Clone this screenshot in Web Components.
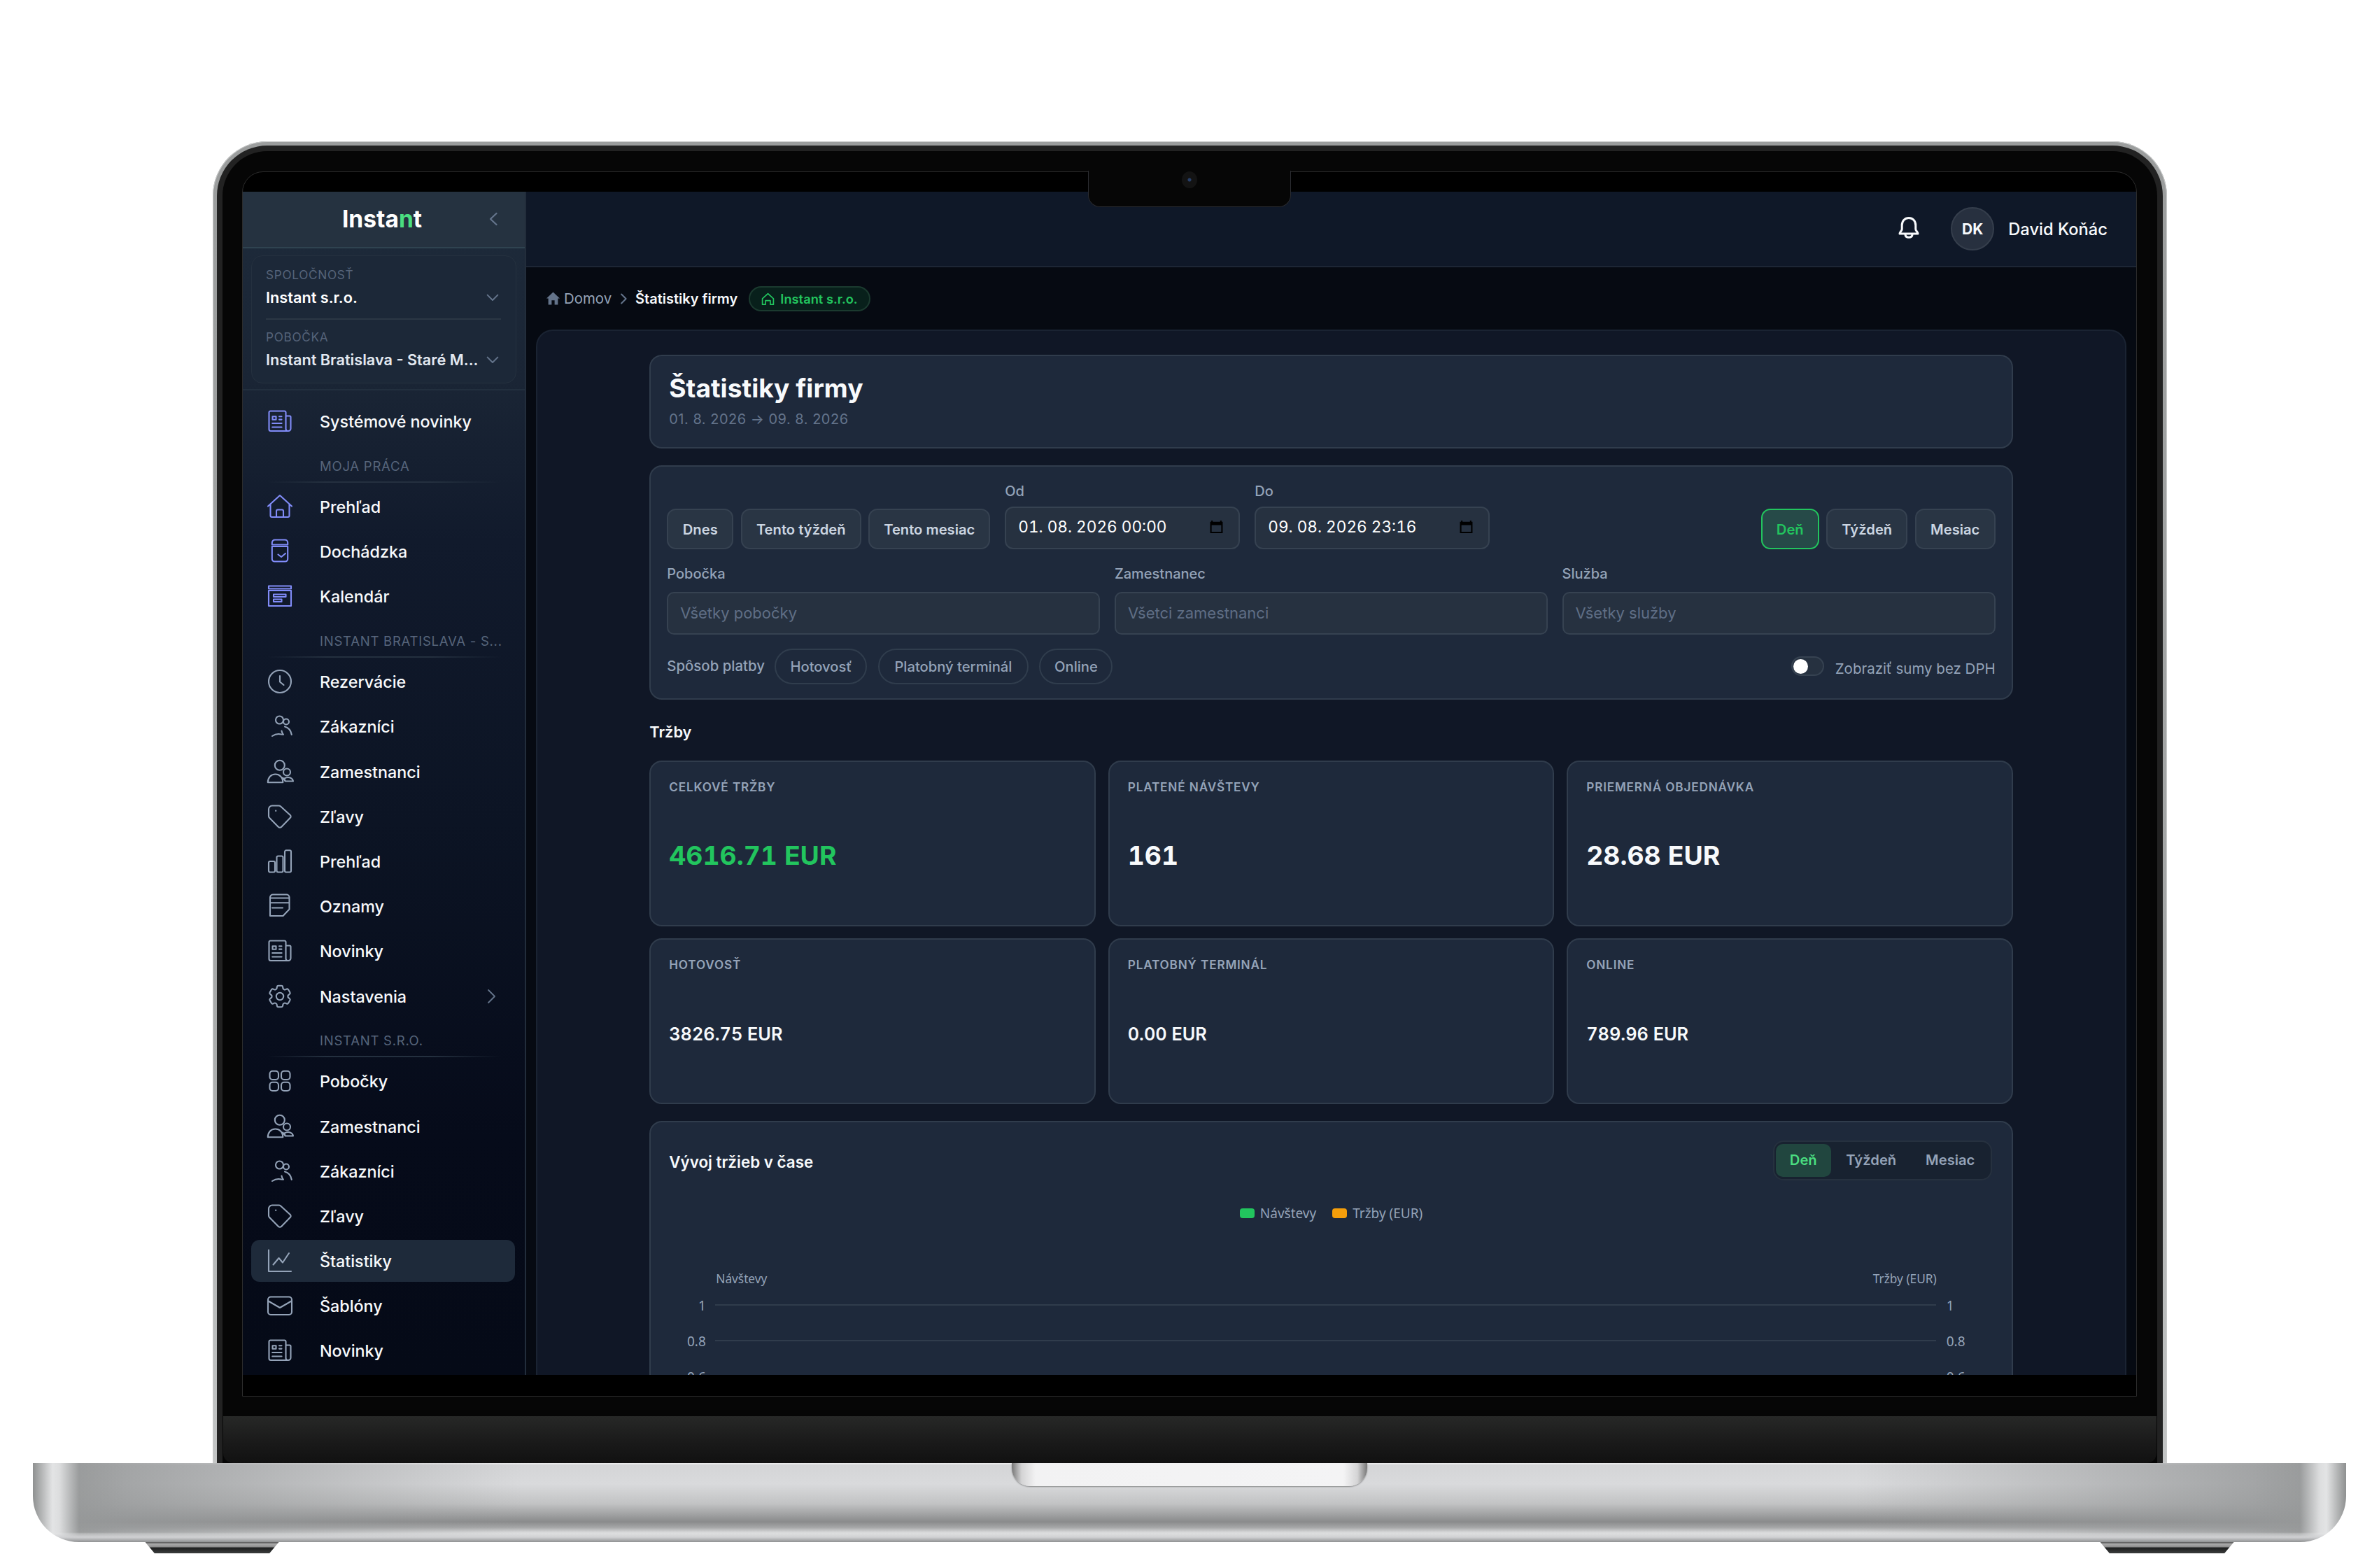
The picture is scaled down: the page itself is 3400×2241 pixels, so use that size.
<!DOCTYPE html>
<html lang="sk">
<head>
<meta charset="utf-8">
<title>Instant – Štatistiky firmy</title>
<style>
  html, body { margin: 0; background: #fff; }
  body {
    width: 3400px;
    height: 2241px;
    overflow: hidden;
    font-family: Inter, "Liberation Sans", sans-serif;
    color: #f8fafc;
    --card: #1e293b;
    --line: #303c4c;
    --muted: #94a3b8;
    --dim: #64748b;
    --green: #22c55e;
  }
</style>
</head>
<body>
<laptop-frame>
  <side-bar slot="screen"></side-bar>
  <main-area slot="screen"></main-area>
</laptop-frame>

<script>
const icons = {
  news: '<path d="M26.5 10V5.5a2 2 0 0 0-2-2H4.500a2 2 0 0 0-2 2v24A2.500 2.500 0 0 0 5 32h25a3.500 3.500 0 0 0 3.500-3.500V12A1.500 1.500 0 0 0 32 10.500h-5.500V29a3 3 0 0 0 3 3"/><path d="M7.500 11.200h5v4.500h-5zM17 11.200h3.500M17 15.600h3.500M7.200 21h13.400M7.200 26.500h13.400"/>',
  home: '<path d="M1 17.500 18 2l17 15.500M4.500 15v16a2 2 0 0 0 2 2h23a2 2 0 0 0 2-2V15M13 33v-8.500a2 2 0 0 1 2-2h6a2 2 0 0 1 2 2V33"/>',
  attend: '<path d="M6.800 8.500V5.500a4 4 0 0 1 4-4h14.400a4 4 0 0 1 4 4v3zM6.800 11h22.400v18a3.500 3.500 0 0 1-3.500 3.500H10.300A3.500 3.500 0 0 1 6.800 29zM15.500 22.500l4.500 3.500 6-5"/>',
  calendar: '<path d="M2 3.500h32v4H2zM2 10h32v22H2zM9 15.500h17.500v3.500H9zM9 22.500h11.500V26H9z"/>',
  clock: '<circle cx="18" cy="18" r="16"/><path d="M18 10v8.500l5.500 4.500"/>',
  clients: '<circle cx="17.500" cy="9" r="5.500"/><circle cx="27" cy="11.500" r="4"/><path d="M7 32c3-2 6.500-3 9-3 3 0 5 1 7 .8-1.500-1.800-2.500-3.300-2.500-5.300M25 18.500c5.500 1.500 8.800 5.500 9.800 11.500"/>',
  staff: '<circle cx="17.800" cy="8.800" r="7"/><circle cx="28" cy="18.500" r="5"/><path d="M.8 33.300c0-7 4.500-11.800 10.700-11.800S22.300 26 22.300 33.300zM22 26.500l4 5M24.500 27.500c6-3 11.500-1 12.500 4H25.500z"/>',
  tag: '<path d="M7 2.500h9.500a4 4 0 0 1 2.600 1L32.800 16a2.600 2.600 0 0 1 0 3.800L20.300 32.700a3.200 3.200 0 0 1-4.600 0L3.200 20A4 4 0 0 1 2 17.200V7.500a5 5 0 0 1 5-5zM12.200 9.600v.4"/>',
  bars: '<rect x="2" y="18" width="9" height="15.500" rx="2"/><rect x="13.500" y="10.500" width="9" height="23" rx="2"/><rect x="25" y="2.300" width="9" height="31.200" rx="2"/>',
  note: '<path d="M4 32V5.500a4 4 0 0 1 4-4h19.500a4 4 0 0 1 4 4V22.500L22.500 32zM4 6.500h27.500M4 13.300h27.500M7 20.500h15"/>',
  gear: '<path vector-effect="non-scaling-stroke" transform="translate(18 18) scale(1.700) translate(-12 -12)" d="M9.594 3.940c.09-.542.56-.94 1.110-.94h2.593c.55 0 1.020.398 1.110.94l.213 1.281c.063.374.313.686.645.87.074.04.147.083.22.127.325.196.72.257 1.075.124l1.217-.456a1.125 1.125 0 0 1 1.370.49l1.296 2.247a1.125 1.125 0 0 1-.26 1.431l-1.003.827c-.293.241-.438.613-.43.992a7.723 7.723 0 0 1 0 .255c-.008.378.137.75.43.991l1.004.827c.424.35.534.955.26 1.430l-1.298 2.247a1.125 1.125 0 0 1-1.369.491l-1.217-.456c-.355-.133-.75-.072-1.076.124a6.470 6.470 0 0 1-.22.128c-.331.183-.581.495-.644.869l-.213 1.281c-.09.543-.56.94-1.110.94h-2.594c-.55 0-1.019-.398-1.110-.94l-.213-1.281c-.062-.374-.312-.686-.644-.87a6.520 6.520 0 0 1-.22-.127c-.325-.196-.72-.257-1.076-.124l-1.217.456a1.125 1.125 0 0 1-1.369-.49l-1.297-2.247a1.125 1.125 0 0 1 .26-1.431l1.004-.827c.292-.24.437-.613.43-.991a6.932 6.932 0 0 1 0-.255c.007-.38-.138-.751-.43-.992l-1.004-.827a1.125 1.125 0 0 1-.26-1.430l1.297-2.247a1.125 1.125 0 0 1 1.370-.491l1.216.456c.356.133.751.072 1.076-.124.072-.044.146-.086.22-.128.332-.183.582-.495.644-.869z"/><circle cx="18" cy="18" r="5.200"/>',
  grid: '<rect x="3.500" y="3.700" width="12.500" height="12.300" rx="4"/><rect x="20" y="3.700" width="12.500" height="12.300" rx="4"/><rect x="3.500" y="19.700" width="12.500" height="12.300" rx="4"/><rect x="20" y="19.700" width="12.500" height="12.300" rx="4"/>',
  stats: '<path d="M2 2.500v30.500h32M8.500 23.500l8-9.500 5.500 6.500 9-13.500"/>',
  mail: '<rect x="1" y="5.500" width="34" height="25.500" rx="4"/><path d="M1.500 11.500 18 21l16.500-9.500"/>',
  left: '<path d="M22.500 10 14 18l8.500 8"/>',
  right: '<path d="m14 9 9 9-9 9"/>',
  down: '<path d="m7 13 11 11 11-11"/>',
  bell: '<path d="M18 2.500c-6 0-9.800 4.500-9.800 10.500v5.500c0 2.500-3.200 4-3.200 6.500h26c0-2.500-3.200-4-3.200-6.500V13c0-6-3.800-10.500-9.800-10.500zM13 26.500c.5 5 9.500 5 10 0"/>',
  date: '<path stroke="none" fill="#000" d="M4 2h4v3h20V2h4v3h3v31H1V5h3zM5 14v18h26V14z" fill-rule="evenodd"/>',
  homeSolid: '<path stroke="none" fill="currentColor" d="M18 1 0 18h5v17h9V23h8v12h9V18h5z"/>',
  building: '<path d="M3 17 18 3l15 14v15.500h-8.500V22h-13v10.500H3z"/>'
};

// <app-icon name size stroke> draws one glyph on a 36x36 grid
class AppIcon extends HTMLElement {
  constructor() {
    super();
    this.attachShadow({ mode: 'open' });
  }

  connectedCallback() {
    const size = this.getAttribute('size') || 36;
    this.shadowRoot.innerHTML = `
      <style>
        :host { display: block; flex: none; width: ${size}px; height: ${size}px; }
        svg { display: block; overflow: visible; }
      </style>
      <svg width="${size}" height="${size}" viewBox="0 0 36 36" fill="none" stroke="currentColor"
        stroke-width="${this.getAttribute('stroke') || 2.1}" stroke-linecap="round" stroke-linejoin="round">
        ${icons[this.getAttribute('name')]}
      </svg>
    `;
  }
}

class LaptopFrame extends HTMLElement {
  constructor() {
    super();
    this.attachShadow({ mode: 'open' }).innerHTML = `
      <style>
        :host { display: flex; flex-direction: column; align-items: center; padding-top: 202px; }
        .lid {
          box-sizing: border-box;
          width: 2793px;
          height: 1889px;
          padding: 6px 6px 0;
          border-radius: 78px 78px 0 0;
          background: linear-gradient(#9b9d9d, #a5a7a7 60%, #c3c5c5);
          box-shadow: inset 0 0 0 1px #c8caca;
        }
        .ring {
          box-sizing: border-box;
          height: 100%;
          padding: 8px 8px 0;
          border-radius: 72px 72px 0 0;
          background: #222;
        }
        .bezel {
          display: flex;
          flex-direction: column;
          align-items: center;
          height: 100%;
          border-radius: 64px 64px 0 0;
          background: #060606;
          position: relative;
        }
        .screen {
          box-sizing: border-box;
          display: flex;
          width: 2708px;
          height: 1751px;
          margin-top: 29px;
          padding: 28px 0 30px;
          border: 1px solid #2c2c2c;
          border-radius: 30px 30px 0 0;
          background: #000;
          overflow: hidden;
        }
        .notch {
          position: absolute;
          top: 28px;
          left: 50%;
          width: 290px;
          height: 52px;
          box-sizing: border-box;
          margin-left: -145px;
          border: 1px solid #2b2c30;
          border-top: 0;
          border-radius: 0 0 17px 17px;
          background: #060606;
          display: flex;
          justify-content: center;
        }
        .cam {
          width: 22px;
          height: 24px;
          margin-top: 1px;
          border-radius: 50%;
          background: radial-gradient(circle, #28406b 2px, #131313 3px);
        }
        .chin {
          width: 2763px;
          height: 67px;
          margin-top: 28px;
          border-radius: 0 0 14px 14px;
          background: linear-gradient(#272827, #1a1a1a 55%, #111);
        }
        .base {
          display: flex;
          justify-content: center;
          width: 3306px;
          height: 113px;
          border-radius: 0 0 66px 66px;
          background:
            linear-gradient(transparent 99px, #e4e5e666 101px, #d0d1d3 106px, #8f9192 113px),
            linear-gradient(90deg, #8e9090, #e3e4e5 28px, #dcddde 38px, #96989866 66px, transparent 130px, transparent 3176px, #96989866 3240px, #dcddde 3268px, #e3e4e5 3278px, #8e9090),
            linear-gradient(90deg, #97999a, transparent 700px, transparent 2606px, #97999a),
            linear-gradient(#efeff0, #d4d5d7 3px, #d9dadc 30px, #c2c3c4 58px, #8a8b8c 84px, #a5a6a7 92px, #d8d9da 99px, #d2d3d5);
        }
        .thumb {
          width: 508px;
          height: 33px;
          border-radius: 0 0 26px 26px;
          background:
            linear-gradient(90deg, #777, #d4d4d5 14px, #f2f2f3 34px, #f4f4f5 474px, #d4d4d5 494px, #777);
          box-shadow: 0 1px 2px #88898a;
        }
        .feet { display: flex; justify-content: space-between; width: 2985px; }
        .foot {
          width: 191px;
          height: 16px;
          clip-path: polygon(0 0, 100% 0, 93% 100%, 7% 100%);
          background: linear-gradient(#555, #aaa 3px, #8b8b8b 7px, #1d1e1e 8px, #3b3d3d);
        }
      </style>
      <div class="lid"><div class="ring"><div class="bezel">
        <div class="screen"><slot name="screen"></slot></div>
        <div class="notch"><div class="cam"></div></div>
        <div class="chin"></div>
      </div></div></div>
      <div class="base"><div class="thumb"></div></div>
      <div class="feet"><div class="foot"></div><div class="foot"></div></div>
    `;
  }
}

class NavItem extends HTMLElement {
  constructor() {
    super();
    this.attachShadow({ mode: 'open' });
  }

  connectedCallback() {
    this.shadowRoot.innerHTML = `
      <style>
        :host {
          display: flex;
          align-items: center;
          height: 60.600px;
          padding: 0 16px 0 23px;
          border-radius: 12px;
          color: #f8fafc;
          font-size: 23.300px;
          font-weight: 500;
          line-height: 30px;
        }
        :host([active]) { background: #1e2a3a; }
        app-icon { color: #94a3b8; }
        :host([accent]) app-icon { color: #818cf8; }
        .text { flex: 1; padding: 2px 0 0 39px; }
        .more { color: #64748b; }
      </style>
      <app-icon name="${this.getAttribute('icon')}"></app-icon>
      <span class="text"><slot></slot></span>
      ${this.hasAttribute('more') ? '<app-icon class="more" name="right" stroke="1.800"></app-icon>' : ''}
    `;
  }
}

class NavGroup extends HTMLElement {
  constructor() {
    super();
    this.attachShadow({ mode: 'open' }).innerHTML = `
      <style>
        :host {
          display: block;
          height: 35px;
          padding: 19px 0 0 22px;
          color: #56647a;
          font-size: 18.600px;
          line-height: 22px;
          letter-spacing: .700px;
          white-space: nowrap;
        }
        .text { padding-left: 76px; }
        .rule { height: 2px; width: 336px; margin-top: 11px; background: linear-gradient(90deg, transparent, #24303f 25%, #24303f 70%, transparent); }
      </style>
      <div class="text"><slot></slot></div>
      <div class="rule"></div>
    `;
  }
}

class SideBar extends HTMLElement {
  constructor() {
    super();
    this.attachShadow({ mode: 'open' }).innerHTML = `
      <style>
        :host {
          box-sizing: border-box;
          flex: none;
          width: 405px;
          height: 100%;
          border-right: 2px solid #222d3b;
          background: linear-gradient(#1e2b3b, #1a2535 270px, #111a2c 500px, #0c1424 900px, #060b1a 1350px, #050a17);
          overflow: hidden;
        }
        .logo {
          box-sizing: border-box;
          display: flex;
          align-items: center;
          height: 81px;
          padding: 0 27px 2px 36px;
          border-bottom: 2px solid #2f4350;
          background: #253240;
          color: #64748b;
        }
        .logo b { flex: 1; padding-left: 22px; text-align: center; color: #fff; font-size: 33.500px; }
        .logo em { color: #4ade80; font-style: normal; }
        .account { padding: 10px 12px 8px; border-bottom: 2px solid #222f3e; }
        .box {
          border: 1px solid #25313f;
          border-radius: 16px;
          padding: 15px 21px 17px 20px;
          background: #1c2838;
        }
        .label { font-size: 17.200px; line-height: 23px; letter-spacing: .7px; color: #56647a; }
        .value {
          display: flex;
          justify-content: space-between;
          align-items: center;
          margin-top: 5px;
          font-size: 21.700px;
          font-weight: 600;
          line-height: 32px;
          color: #fff;
        }
        .value.second { color: #e2e8f0; }
        .value app-icon { color: #64748b; }
        hr { height: 2px; margin: 14px 0 13px; border: 0; background: #2b3745; }
        nav { display: flex; flex-direction: column; gap: 3.600px; padding: 14px 14px 0 12px; }
      </style>
      <div class="logo"><b>Insta<em>n</em>t</b><app-icon name="left" stroke="2.300"></app-icon></div>
      <div class="account">
        <div class="box">
          <div class="label">SPOLOČNOSŤ</div>
          <div class="value">Instant s.r.o.<app-icon name="down" size="24" stroke="3"></app-icon></div>
          <hr>
          <div class="label">POBOČKA</div>
          <div class="value second">Instant Bratislava - Staré M...<app-icon name="down" size="24" stroke="3"></app-icon></div>
        </div>
      </div>
      <nav>
        <nav-item icon="news" accent>Systémové novinky</nav-item>
        <nav-group>MOJA PRÁCA</nav-group>
        <nav-item icon="home" accent>Prehľad</nav-item>
        <nav-item icon="attend" accent>Dochádzka</nav-item>
        <nav-item icon="calendar" accent>Kalendár</nav-item>
        <nav-group>INSTANT BRATISLAVA - S...</nav-group>
        <nav-item icon="clock">Rezervácie</nav-item>
        <nav-item icon="clients">Zákazníci</nav-item>
        <nav-item icon="staff">Zamestnanci</nav-item>
        <nav-item icon="tag">Zľavy</nav-item>
        <nav-item icon="bars">Prehľad</nav-item>
        <nav-item icon="note">Oznamy</nav-item>
        <nav-item icon="news">Novinky</nav-item>
        <nav-item icon="gear" more>Nastavenia</nav-item>
        <nav-group>INSTANT S.R.O.</nav-group>
        <nav-item icon="grid">Pobočky</nav-item>
        <nav-item icon="staff">Zamestnanci</nav-item>
        <nav-item icon="clients">Zákazníci</nav-item>
        <nav-item icon="tag">Zľavy</nav-item>
        <nav-item icon="stats" active>Štatistiky</nav-item>
        <nav-item icon="mail">Šablóny</nav-item>
        <nav-item icon="news">Novinky</nav-item>
      </nav>
    `;
  }
}

class MainArea extends HTMLElement {
  constructor() {
    super();
    this.attachShadow({ mode: 'open' }).innerHTML = `
      <style>
        :host {
          display: flex;
          flex-direction: column;
          flex: 1;
          min-width: 0;
          height: 100%;
          background: #060a12;
          overflow: hidden;
        }
        header {
          box-sizing: border-box;
          flex: none;
          display: flex;
          align-items: center;
          justify-content: flex-end;
          height: 108px;
          padding-right: 41px;
          border-bottom: 2px solid #1d2635;
          background: #0f1828;
        }
        .avatar {
          box-sizing: border-box;
          display: grid;
          place-content: center;
          width: 62px;
          height: 62px;
          margin: 0 20px 0 42px;
          border: 2px solid #353e4c;
          border-radius: 50%;
          background: #27303f;
          font-size: 21px;
          font-weight: 700;
        }
        .user { padding-top: 1px; font-size: 23.700px; font-weight: 500; }
        .crumbs {
          flex: none;
          display: flex;
          align-items: center;
          height: 89px;
          padding-left: 29px;
          font-size: 20.400px;
          color: var(--muted);
        }
        .crumbs app-icon { color: #64748b; }
        .crumbs b { font-size: 20px; font-weight: 600; color: #f8fafc; }
        .tag {
          box-sizing: border-box;
          display: flex;
          align-items: center;
          width: 174px;
          height: 36px;
          margin-left: 16px;
          padding-left: 16px;
          border: 2px solid #1b3a2f;
          border-radius: 18px;
          background: #08201b;
          color: var(--green);
          font-size: 18.300px;
          font-weight: 600;
        }
        .tag app-icon { color: var(--green); margin-right: 8px; padding-top: 2px; }
        .panel {
          flex: 1;
          min-height: 0;
          margin: 0 14px 0 14px;
          border: 2px solid #1a2332;
          border-bottom: 0;
          border-radius: 24px 24px 0 0;
          background: #101726;
        }
      </style>
      <header>
        <app-icon name="bell" stroke="3"></app-icon>
        <div class="avatar">DK</div>
        <div class="user">David Koňác</div>
      </header>
      <div class="crumbs">
        <app-icon name="homeSolid" size="19"></app-icon>
        <span style="margin-left:6px">Domov</span>
        <app-icon name="right" size="26" stroke="2.800" style="margin:0 4px 0 4px"></app-icon>
        <b>Štatistiky firmy</b>
        <div class="tag"><app-icon name="building" size="19" stroke="3.200"></app-icon>Instant s.r.o.</div>
      </div>
      <div class="panel"><stats-page></stats-page></div>
    `;
  }
}

class FieldLabel extends HTMLElement {
  constructor() {
    super();
    this.attachShadow({ mode: 'open' }).innerHTML = `
      <style>
        :host { display: block; color: var(--muted); font-size: 20px; font-weight: 500; line-height: 26px; }
      </style>
      <slot></slot>
    `;
  }
}

class UiButton extends HTMLElement {
  constructor() {
    super();
    this.attachShadow({ mode: 'open' }).innerHTML = `
      <style>
        :host {
          box-sizing: border-box;
          display: grid;
          place-content: center;
          height: 58px;
          border: 2px solid #364251;
          border-radius: 13px;
          background: #293544;
          color: #cbd5e1;
          font-size: 20.200px;
          font-weight: 600;
        }
        :host([on]) { border-color: var(--green); background: #264a48; color: var(--green); }
        :host([chip]) {
          height: 51px;
          border-color: #303d4d;
          border-radius: 26px;
          background: transparent;
          color: var(--muted);
          font-size: 20.200px;
          font-weight: 550;
        }
      </style>
      <slot></slot>
    `;
  }
}

class InputBox extends HTMLElement {
  constructor() {
    super();
    this.attachShadow({ mode: 'open' });
  }

  connectedCallback() {
    this.shadowRoot.innerHTML = `
      <style>
        :host { display: flex; flex-direction: column; gap: 13px; }
        :host([date]) { gap: 9.500px; width: 336px; }
        .box {
          box-sizing: border-box;
          display: flex;
          align-items: center;
          justify-content: space-between;
          height: 61px;
          padding: 0 17px;
          border: 2px solid #364251;
          border-radius: 10px;
          background: #263140;
          color: #5f6e85;
          font-size: 22px;
        }
        :host([date]) .box { padding: 0 22px 4px 17px; border-radius: 12px; color: #fff; font-size: 22.600px; font-variant-numeric: tabular-nums; }
      </style>
      <field-label>${this.getAttribute('label')}</field-label>
      <div class="box"><slot></slot>${this.hasAttribute('date') ? '<app-icon name="date" size="19"></app-icon>' : ''}</div>
    `;
  }
}

class KpiCard extends HTMLElement {
  constructor() {
    super();
    this.attachShadow({ mode: 'open' }).innerHTML = `
      <style>
        :host {
          box-sizing: border-box;
          display: flex;
          flex-direction: column;
          border: 2px solid var(--line);
          border-radius: 18px;
          padding: 23px 26px;
          background: var(--card);
          font-variant-numeric: tabular-nums;
        }
        .label { color: var(--muted); font-size: 17.200px; font-weight: 600; line-height: 26px; letter-spacing: .8px; }
        .value { padding-top: 61px; font-size: 25.300px; font-weight: 600; line-height: 50px; }
        :host([big]) .value { font-size: 37.300px; font-weight: 700; padding-top: 60px; }
        :host([green]) .value { color: var(--green); }
      </style>
      <div class="label"><slot name="label"></slot></div>
      <div class="value"><slot></slot></div>
    `;
  }
}

class TrendChart extends HTMLElement {
  constructor() {
    super();
    this.attachShadow({ mode: 'open' }).innerHTML = `
      <style>
        :host { display: block; font-family: "Noto Sans", sans-serif; color: var(--muted); }
        .legend { display: flex; justify-content: center; align-items: center; height: 28px; font-size: 19px; }
        .legend i { width: 21px; height: 14px; margin-right: 8px; border-radius: 4px; background: var(--green); }
        .legend span { margin-right: 23px; }
        .legend .rev { margin-right: 0; }
        .legend .orange { background: #f59e0b; }
        .names { display: flex; justify-content: space-between; padding: 68px 81px 0 67px; font-size: 17.300px; line-height: 24px; }
        .row { display: grid; grid-template-columns: 51px 1fr 67px; column-gap: 15px; height: 51px; align-items: start; font-size: 19px; line-height: 26px; }
        .rows { padding-top: 13px; }
        .row span:first-child { text-align: right; margin-right: -1.500px; }
        .row u { height: 2px; margin-top: 11px; background: #303c4c; }
      </style>
      <div class="legend"><i></i><span>Návštevy</span><i class="orange"></i><span class="rev">Tržby (EUR)</span></div>
      <div class="names"><span>Návštevy</span><span>Tržby (EUR)</span></div>
      <div class="rows">
        <div class="row"><span>1</span><u></u><span>1</span></div>
        <div class="row"><span>0.8</span><u></u><span>0.8</span></div>
        <div class="row"><span>0.6</span><u></u><span>0.6</span></div>
      </div>
    `;
  }
}

class StatsPage extends HTMLElement {
  constructor() {
    super();
    this.attachShadow({ mode: 'open' }).innerHTML = `
      <style>
        :host { display: block; width: 1948.500px; margin: 0 auto; padding-top: 34px; }
        .card { box-sizing: border-box; border: 2px solid var(--line); border-radius: 18px; background: var(--card); }
        .head { height: 134px; padding: 23px 26px; }
        h1 { margin: 0; font-size: 37.200px; font-weight: 700; line-height: 46px; }
        .range { margin-top: 8px; color: var(--dim); font-size: 20px; line-height: 26px; letter-spacing: .5px; }
        .filters { height: 335px; margin-top: 23.500px; padding: 22px 23px; }
        .row { display: flex; align-items: flex-end; }
        .group { display: flex; gap: 10.500px; margin-right: 21px; }
        .group.right { margin: 0 0 0 auto; }
        .selects { display: grid; grid-template-columns: repeat(3, 1fr); gap: 20.500px; margin: 21.500px 0 20px; }
        .pay { align-items: center; gap: 15.500px; height: 51px; }
        .pay field-label { margin-right: -1px; font-size: 20.400px; }
        .switch {
          box-sizing: border-box;
          width: 47px;
          height: 28px;
          margin-left: auto;
          padding: 1px;
          border: 2px solid #364251;
          border-radius: 14px;
          background: #263140;
          display: flex;
        }
        .switch i { width: 21px; height: 21px; margin-top: .5px; border-radius: 50%; background: #fff; }
        .vat { padding-top: 7px; color: var(--muted); font-size: 20.500px; line-height: 26px; }
        h2 { margin: 0; font-size: 22.400px; font-weight: 600; line-height: 30px; }
        .sec { padding: 31px 0 26.500px; font-size: 21.800px; }
        .kpis { display: grid; grid-template-columns: repeat(3, 1fr); grid-auto-rows: 237px; gap: 17px 18px; }
        .chart { height: 500px; margin-top: 23.500px; padding: 27px 26px; }
        .top { display: flex; justify-content: space-between; align-items: center; height: 56px; margin-bottom: 33px; padding-bottom: 0; }
        .top h2 { padding-top: 4px; }
        .seg {
          box-sizing: border-box;
          display: flex;
          width: 313px;
          height: 57px;
          margin-right: 2px;
          padding: 3px 2px;
          border: 2px solid #26313f;
          border-radius: 15px;
          background: #182230;
          color: var(--muted);
          font-size: 20.200px;
          font-weight: 600;
          text-align: center;
          line-height: 46px;
        }
        .seg span { border-radius: 10px; height: 47px; }
        .seg .on { background: #21463f; color: #4ade80; }
      </style>
      <div class="card head">
        <h1>Štatistiky firmy</h1>
        <div class="range">01. 8. 2026 → 09. 8. 2026</div>
      </div>
      <div class="card filters">
        <div class="row">
          <div class="group">
            <ui-button style="width:95px">Dnes</ui-button>
            <ui-button style="width:172px">Tento týždeň</ui-button>
            <ui-button style="width:174px">Tento mesiac</ui-button>
          </div>
          <input-box date label="Od" style="margin-right:21px">01. 08. 2026 00:00</input-box>
          <input-box date label="Do">09. 08. 2026 23:16</input-box>
          <div class="group right">
            <ui-button on style="width:83px">Deň</ui-button>
            <ui-button style="width:116px">Týždeň</ui-button>
            <ui-button style="width:115px">Mesiac</ui-button>
          </div>
        </div>
        <div class="selects">
          <input-box label="Pobočka">Všetky pobočky</input-box>
          <input-box label="Zamestnanec">Všetci zamestnanci</input-box>
          <input-box label="Služba">Všetky služby</input-box>
        </div>
        <div class="row pay">
          <field-label>Spôsob platby</field-label>
          <ui-button chip style="width:132px">Hotovosť</ui-button>
          <ui-button chip style="width:215px">Platobný terminál</ui-button>
          <ui-button chip style="width:105px">Online</ui-button>
          <div class="switch"><i></i></div>
          <div class="vat">Zobraziť sumy bez DPH</div>
        </div>
      </div>
      <h2 class="sec">Tržby</h2>
      <div class="kpis">
        <kpi-card big green><span slot="label">CELKOVÉ TRŽBY</span>4616.71 EUR</kpi-card>
        <kpi-card big><span slot="label">PLATENÉ NÁVŠTEVY</span>161</kpi-card>
        <kpi-card big><span slot="label">PRIEMERNÁ OBJEDNÁVKA</span>28.68 EUR</kpi-card>
        <kpi-card><span slot="label">HOTOVOSŤ</span>3826.75 EUR</kpi-card>
        <kpi-card><span slot="label">PLATOBNÝ TERMINÁL</span>0.00 EUR</kpi-card>
        <kpi-card><span slot="label">ONLINE</span>789.96 EUR</kpi-card>
      </div>
      <div class="card chart">
        <div class="top">
          <h2>Vývoj tržieb v čase</h2>
          <div class="seg">
            <span class="on" style="width:79px">Deň</span>
            <span style="width:115px">Týždeň</span>
            <span style="width:111px">Mesiac</span>
          </div>
        </div>
        <trend-chart></trend-chart>
      </div>
    `;
  }
}

customElements.define('app-icon', AppIcon);
customElements.define('laptop-frame', LaptopFrame);
customElements.define('nav-item', NavItem);
customElements.define('nav-group', NavGroup);
customElements.define('side-bar', SideBar);
customElements.define('field-label', FieldLabel);
customElements.define('ui-button', UiButton);
customElements.define('input-box', InputBox);
customElements.define('kpi-card', KpiCard);
customElements.define('trend-chart', TrendChart);
customElements.define('stats-page', StatsPage);
customElements.define('main-area', MainArea);
</script>
</body>
</html>
